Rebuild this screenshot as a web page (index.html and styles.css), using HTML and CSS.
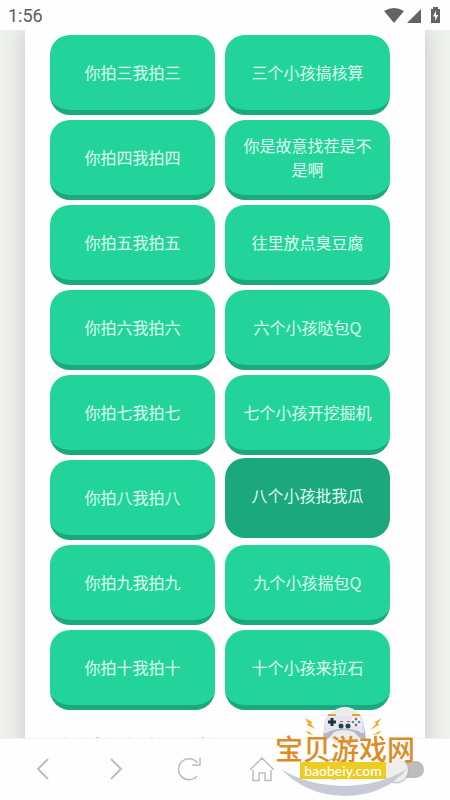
FILE: index.html
```html
<!DOCTYPE html>
<html lang="zh-CN">
<head>
<meta charset="utf-8">
<meta name="viewport" content="width=device-width, initial-scale=1">
<title>你拍一我拍一</title>
<link rel="stylesheet" href="styles.css">
</head>
<body>
<header class="status">
  <span class="clock">1:56</span>
  <svg class="status-icons" width="58" height="18" viewBox="0 0 58 18" aria-hidden="true">
    <path d="M0 4Q10-2 20 4L10 16Z"/>
    <path d="M37 2V16H23Z"/>
    <path d="M47 2h2V0h5v2h2v14h-9Z"/>
    <path class="bolt" d="M52 3.500l-3 6h2.200v4.500l3-6H52Z"/>
  </svg>
</header>
<main class="page">
  <section class="card">
    <div class="sounds">
      <button class="sound">你拍三我拍三</button>
      <button class="sound">三个小孩搞核算</button>
      <button class="sound">你拍四我拍四</button>
      <button class="sound">你是故意找茬是不是啊</button>
      <button class="sound">你拍五我拍五</button>
      <button class="sound">往里放点臭豆腐</button>
      <button class="sound">你拍六我拍六</button>
      <button class="sound">六个小孩哒包Q</button>
      <button class="sound">你拍七我拍七</button>
      <button class="sound">七个小孩开挖掘机</button>
      <button class="sound">你拍八我拍八</button>
      <button class="sound pressed">八个小孩批我瓜</button>
      <button class="sound">你拍九我拍九</button>
      <button class="sound">九个小孩揣包Q</button>
      <button class="sound">你拍十我拍十</button>
      <button class="sound">十个小孩来拉石</button>
    </div>
    <h2 class="heading">在线测试 O 学</h2>
  </section>
</main>
<nav class="toolbar">
  <button class="tool" aria-label="后退"><svg width="28" height="28" viewBox="0 0 28 28"><path class="thick" d="M19 3L9 13L19 23"/></svg></button>
  <button class="tool" aria-label="前进"><svg width="28" height="28" viewBox="0 0 28 28"><path class="thick" d="M9 3L19 13L9 23"/></svg></button>
  <button class="tool" aria-label="刷新"><svg width="28" height="28" viewBox="0 0 28 28"><path d="M22.500 7A10.500 10.500 0 1 0 22 20M25 2V9H17"/></svg></button>
  <button class="tool" aria-label="主页"><svg width="28" height="28" viewBox="0 0 28 28"><path d="M3 14L15 2L27 14M6 14V24.500H12V17H18V24.500H24V14"/></svg></button>
  <button class="tool" aria-label="菜单"><svg width="28" height="28" viewBox="0 0 28 28"><circle cx="14" cy="13" r="10"/></svg></button>
  <label class="switch"><input type="checkbox" aria-label="切换"></label>
</nav>
<aside class="brand">
  <svg class="brand-art" width="142" height="96" viewBox="0 0 142 96" aria-hidden="true">
    <circle cx="67" cy="22" r="19" fill="#ebebeb"/>
    <path d="M3 65Q28 81 66 82Q104 81 129 65Q106 92 66 92Q28 91 3 65Z" fill="#c8cad8"/>
    <path d="M50 11h8M74 11h8" stroke="#e3a52d" stroke-width="2"/>
    <path d="M51 12H59Q66 15 73 12H81Q84 12 85 17L88 34Q87 38 83 35L76 28Q66 24 56 28L50 35Q46 38 45 34L47 17Q48 12 51 12Z" fill="#b4b6c6"/>
    <path d="M51 12H59Q66 15 73 12H81Q84 12 85 17L86 29Q84 30 80 27Q66 22 52 27Q48 30 46 29L47 17Q48 12 51 12Z" fill="#e6e6f2"/>
    <path d="M54 14v8M50 18h8" stroke="#17343f" stroke-width="3"/>
    <g fill="#1d4652"><circle cx="63" cy="22" r="2.500"/><circle cx="70" cy="22" r="2.500"/></g>
    <circle cx="78" cy="18" r="5" fill="#fff"/>
    <g fill="#e3464f"><circle cx="78" cy="15" r="1.500"/><circle cx="78" cy="21" r="1.500"/><path d="M62 17h3v1h-3zM69 17h3v1h-3z"/></g>
    <g fill="#2ba2c5"><circle cx="75" cy="18" r="1.500"/><circle cx="81" cy="18" r="1.500"/></g>
    <g fill="#f2ae20"><path d="M27 14l7 4-1 2 4 5-8-4 1-2ZM27 27l5 1v1l4 2-6-1v-1ZM104 14l-7 4 1 2-6 6 9-5-1-2ZM104 27l-5 1v1l-6 2 8-1v-1Z"/></g>
  </svg>
  <span class="brand-name">宝贝游戏网</span>
  <span class="brand-url">baobeiy.com</span>
</aside>
</body>
</html>
```
FILE: styles.css
```css
* { box-sizing: border-box; }

body {
  margin: 0;
  height: 100vh;
  display: flex;
  flex-direction: column;
  position: relative;
  overflow: hidden;
  background: #fefefe;
  font-family: "Noto Sans CJK SC", sans-serif;
}

button { font: inherit; border: 0; }

.status {
  flex: none;
  height: 30px;
  padding: 1px 8px 0;
  display: flex;
  align-items: center;
  justify-content: space-between;
  color: #5c5c5c;
  font: 18px Roboto, sans-serif;
}
.status-icons { fill: #636363; }
.bolt { fill: #fff; }

.page {
  flex: 1;
  min-height: 0;
  overflow: hidden;
  padding: 0 25px;
  background: #f0f2ef;
}

.card {
  min-height: 100%;
  padding: 5px 35px 0 25px;
  background: #fefefe;
  box-shadow: 0 0 24px #c3c5c3;
}

.sounds {
  display: grid;
  grid-template-columns: 1fr 1fr;
  gap: 5px 10px;
}

.sound {
  height: 80px;
  padding: 0 15px 2px;
  border-bottom: 5px solid #1ca87d;
  border-radius: 20px;
  background: #23d49a;
  color: #dffff0;
  font-size: 16px;
  line-height: 24px;
}
.pressed {
  background: #1ca87d;
  transform: translateY(-2px);
}

.heading {
  margin: 21px 0 0 5px;
  color: #23d49a;
  font-size: 26px;
  font-weight: 500;
  line-height: 36px;
}

.toolbar {
  flex: none;
  height: 62px;
  padding: 0 7px;
  display: grid;
  grid-template-columns: repeat(6, 1fr);
  align-items: center;
  justify-items: center;
  border-top: 1px solid #f4f4f4;
  background: #fefefe;
}
.tool {
  display: flex;
  padding: 0;
  background: none;
}
.tool svg {
  fill: none;
  stroke: #bdbdbd;
  stroke-width: 1.5;
}
.tool .thick { stroke-width: 2; }

.switch { display: flex; }
.switch input {
  appearance: none;
  display: flex;
  align-items: center;
  width: 34px;
  height: 17px;
  margin: 0;
  border-radius: 10px;
  background: #bcbcbc;
}
.switch input::before {
  content: "";
  flex: none;
  width: 24px;
  height: 24px;
  margin-left: -6px;
  border-radius: 50%;
  background: #eee;
  box-shadow: 0 1px 2px #aaa;
}

.brand {
  position: absolute;
  right: 30px;
  bottom: 0;
  width: 142px;
  height: 96px;
  display: flex;
  flex-direction: column;
  align-items: center;
  pointer-events: none;
}
.brand-art {
  position: absolute;
  inset: 0;
}
.brand-name {
  position: relative;
  margin: 30px 8px 0 0;
  color: #df8b24;
  font-size: 28px;
  font-weight: 500;
  line-height: 28px;
  white-space: nowrap;
}
.brand-url {
  position: relative;
  margin-right: 12px;
  padding: 0 4px;
  background: #edcc24;
  color: #fff;
  font-family: Lato, sans-serif;
  font-size: 14px;
  font-weight: 500;
  line-height: 17px;
}
```
